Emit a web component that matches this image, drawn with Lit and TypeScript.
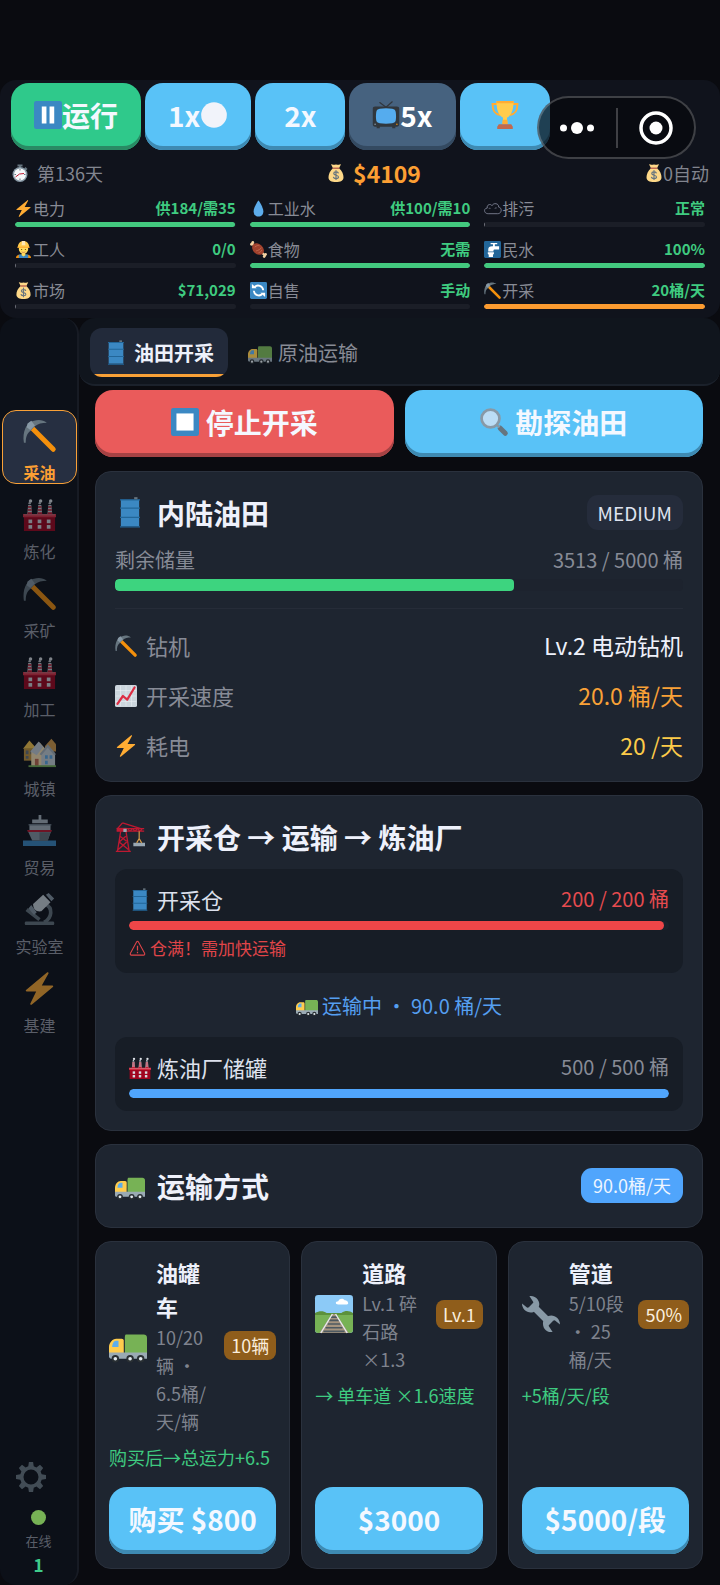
import { LitElement, html, css, svg, nothing } from "lit";
import { customElement, property, state } from "lit/decorators.js";

const chimney = (x: number) => svg`
  <path fill="#c8cdd4" d="M${x + 0.6} 7.5h3.4l.9 10.500h-5.200z"/>
  <path fill="#be1931" d="M${x + 0.4} 9h3.800v1.700h-3.900zM${x + 0.2} 12.300h4.300v1.700h-4.400zM${x} 15.600h4.800v2.400h-4.900z"/>
  <circle fill="#dfe3e8" cx="${x + 3.2}" cy="3.200" r="1.900"/>
  <circle fill="#c3c9d0" cx="${x + 2.2}" cy="5.600" r="1.300"/>`;

const windowCell = (x: number, y: number) =>
  svg`<rect fill="#d5dae0" x="${x}" y="${y}" width="4" height="4"/>`;

const art: Record<string, unknown> = {
  pause: svg`<rect fill="#3b88c3" width="36" height="36" rx="3"/><path fill="#fff" d="M10 7h6v22h-6zM20 7h6v22h-6z"/>`,
  stop: svg`<rect fill="#3b88c3" width="36" height="36" rx="3"/><path fill="#fff" d="M7 7h22v22H7z"/>`,
  circle: svg`<circle fill="#f1f3fa" cx="18" cy="18" r="16.500"/>`,
  tv: svg`<path stroke="#31373d" stroke-width="1.500" stroke-linecap="round" fill="none" d="M18 8L10 2M18 8l8-7"/>
    <path fill="#31373d" d="M4 7h28c2 0 3 1 3 3v20c0 2-1 3-3 3h-2v2h-4v-2H10v2H6v-2H4c-2 0-3-1-3-3V10c0-2 1-3 3-3z"/>
    <path fill="#55acee" d="M10 10c5-1 11-1 16 0 3 .5 4 2 4.500 4 .6 3.500.6 8 0 11-.5 2-1.500 3-4.500 3.500-5 .8-11 .8-16 0-3-.5-4-1.500-4.500-3.500-.6-3-.6-7.500 0-11 .5-2 1.500-3.500 4.500-4z"/>
    <circle fill="#f4900c" cx="32" cy="30" r="1"/><circle fill="#8899a6" cx="4" cy="30" r="1"/>`,
  trophy: svg`<path fill="none" stroke="#ffac33" stroke-width="2.600" d="M9 4H2c0 8 2 13 10 14M27 4h7c0 8-2 13-10 14"/>
    <path fill="#ffcc4d" d="M7 0h22c0 10-2 18-8.500 21.500L21 29h-6l.5-7.500C9 18 7 10 7 0z"/>
    <path fill="#ffac33" d="M7 0h22v3H7zM15 24h6l.6 6h-7.200z"/><path fill="#c1694f" d="M10 30h16l2 3v3H8v-3z"/>`,
  stopwatch: svg`<path fill="#66757f" d="M13 1h10v4h-3v4h-4V5h-3zM29 6l4 4-3 3-4-4z"/><circle fill="#8899a6" cx="18" cy="21" r="15"/>
    <circle fill="#f5f8fa" cx="18" cy="21" r="12"/><path fill="none" stroke="#be1931" stroke-width="2" d="M9 26l8-6 9-1"/><path stroke="#66757f" stroke-width="2" d="M18 10v3M18 29v3M7 21h3M26 21h3"/>`,
  money: svg`<path fill="#fdd888" d="M11 1c2 1.500 4 0 7 0s5 1.500 7 0l3-.5-4 8c6 5 9 12 9 18 0 7-6 9.500-15 9.500S3 33.500 3 26.500c0-6 3-13 9-18L8 .5z"/>
    <path fill="#bf6952" d="M12 7h12c1.200 0 1.200 3 0 3H12c-1.200 0-1.200-3 0-3z"/>
    <path fill="none" stroke="#67757f" stroke-width="2.400" stroke-linecap="round" d="M22.500 18c-1-3-9-3-9 1 0 4.500 9.500 2.500 9.500 7 0 4-9 4-10 .5M18 13v18"/>`,
  bolt: svg`<path fill="#ffac33" d="M32.900 15.200c-.1-.3-.4-.5-.8-.5H20.500L27.800 1.500c.4-.8-.5-1.700-1.300-1.100L3.300 19.600c-.6.5-.3 1.600.6 1.600h10.500L8 34.400c-.4.900.6 1.800 1.400 1.200l23.200-19.300c.3-.3.400-.7.300-1.100z"/>`,
  drop: svg`<path fill="#5dadec" d="M28.300 23.600C28.300 30.500 24.200 35 18 35S7.700 30.500 7.700 23.600 17 1 18 1s10.300 15.700 10.300 22.600z"/>`,
  cloud: svg`<path fill="none" stroke="#82869a" stroke-width="1.800" d="M9 29c-10 0-10-12-2-12-2-7 7-10 10-5 3-7 15-5 14 3 8 1 7 14-2 14z"/><path fill="none" stroke="#82869a" stroke-width="1.400" d="M10 19c1-2 3-2 4-1M27 17c-2-1-4 0-4 2"/>`,
  worker: svg`<path fill="#f4900c" d="M2 36c0-5 4-7 8-7h16c4 0 8 2 8 7z"/><path fill="#3b88c3" d="M8 36v-7l5-1 5 3 5-3 5 1v7z"/>
    <path fill="#ffdc5d" d="M14 24h8v6l-4 3-4-3z"/><circle fill="#ffdc5d" cx="18" cy="17" r="10"/>
    <path fill="#ffcc4d" d="M6 14C6 5 11 0 18 0s12 5 12 14z"/><path fill="#ffe8b6" d="M15 0h6l1 9h-8z"/><path fill="#ffac33" d="M5 12h26v2.500H5z"/>
    <circle fill="#664500" cx="14" cy="18" r="1.300"/><circle fill="#664500" cx="22" cy="18" r="1.300"/><path stroke="#c1694f" stroke-width="1.500" fill="none" d="M14 23c2 1.500 6 1.500 8 0"/>`,
  meat: svg`<path stroke="#f3d2a2" stroke-width="4.500" stroke-linecap="round" d="M4 5l28 26"/><circle fill="#f3d2a2" cx="6" cy="3" r="2.800"/><circle fill="#f3d2a2" cx="3" cy="7" r="2.800"/><circle fill="#f3d2a2" cx="33" cy="28" r="2.800"/><circle fill="#f3d2a2" cx="30" cy="33" r="2.800"/>
    <ellipse fill="#a0412d" cx="17" cy="17" rx="14" ry="10.500" transform="rotate(43 17 17)"/><path fill="none" stroke="#c1694f" stroke-width="2" d="M10 13c5-4 8-4 10-3M13 21c5-1 9-4 11-7M18 25c3-1 6-3 7-6"/>`,
  tap: svg`<rect fill="#226699" width="36" height="36" rx="3"/><path fill="#fff" d="M14 4h14v3h-5v4h9v7h-9c-2 0-3 1-3 3v1H9v-4c0-5 3-7 8-7h2V7h-5zM8 24h13v3l-2 2v5H10v-5l-2-2z"/>`,
  cycle: svg`<rect fill="#3b88c3" width="36" height="36" rx="3"/><path fill="none" stroke="#fff" stroke-width="4" d="M10 10.500c6-6 17-2.500 18 7M26 25.500c-6 6-17 2.500-18-7"/><path fill="#fff" d="M4 13V4l10 9zM32 23v9l-10-9z"/>`,
  pickaxe: svg`<path stroke="#f4900c" stroke-width="5.400" stroke-linecap="round" d="M9 9l24 24"/><path fill="#66757f" d="M1 26C-1 14 4 3 12 2c5-2 10-1 14 2-5 0-10 1-13 4l-5 5C4 16 3 20 3 26z"/><path fill="#8899a6" d="M5 5l4-3 4 5-5 5-4-3z"/>`,
  barrel: svg`<path fill="#3b88c3" d="M7 2h22v32H7z"/><path fill="#226699" d="M6 1.500h24V3H6zM6 11.500h24V13H6zM6 22.500h24V24H6zM6 34h24v1.500H6z"/><path fill="#67757f" d="M23-1h4v2.500h-4z"/>`,
  truck: svg`<g transform="translate(0 3)"><path fill="#77b255" d="M16 5h17c1.500 0 3 1 3 3v15H15V8c0-2 .5-3 1-3z"/><path fill="#ffcc4d" d="M7 9h5c1.500 0 2 1 2 2v12H0v-6c0-4 3-8 7-8z"/>
    <path fill="#5dadec" d="M6.500 11H9v6H3c0-3 1.500-6 3.500-6z"/><path fill="#9aaab4" d="M0 22h36v6H2c-1 0-2-1-2-2z"/>
    <g fill="#292f33"><circle cx="6" cy="28" r="3.500"/><circle cx="20" cy="28" r="3.500"/><circle cx="30" cy="28" r="3.500"/></g><g fill="#e1e8ed"><circle cx="6" cy="28" r="1.700"/><circle cx="20" cy="28" r="1.700"/><circle cx="30" cy="28" r="1.700"/></g></g>`,
  glass: svg`<path stroke="#66757f" stroke-width="6.500" stroke-linecap="round" d="M26 26l6.500 6.500"/><path stroke="#8899a6" stroke-width="3" d="M21 21l4 4"/><circle fill="#bbddf5" stroke="#8899a6" stroke-width="3.500" cx="13.500" cy="13.500" r="11.500"/>`,
  factory: svg`${chimney(5)}${chimney(16)}${chimney(27)}<path fill="#a0041e" d="M1 18h34v18H1z"/><path fill="#dd2e44" d="M0 17.500h36V21H0z"/><path fill="#c98a92" d="M1 18h34v.8H1z"/>
    ${[6, 16, 26].map((x) => [windowCell(x, 23.5), windowCell(x, 29.5)])}`,
  houses: svg`<path fill="#c6983c" d="M1 15h12v13H1z"/><path fill="#ffcc4d" d="M0 15L7 6l8 9z"/><path fill="#67757f" d="M3 17h3v4H3zM8 17h3v4H8zM3 23h3v3H3z"/><path fill="#d99e4a" d="M24 12l7-8 5 6v8H24z"/><path fill="#ffe8b6" d="M9 18l9-10 9 10v16H9z"/><path fill="#c8d4dd" d="M8 18L17 7l5 6-7 9z"/><path fill="#ccd6dd" d="M20 20l7-8 8 8v14H20z"/><path fill="#aab8c2" d="M18 21l9-11 9 11-2 1-7-8-7 8z"/><path fill="#c1694f" d="M13 26h4v8h-4z"/><path fill="#5dadec" d="M24 22h3v4h-3zM29 22h3v4h-3zM24 28h3v4h-3z"/><path fill="#77b255" d="M6 33h30v2H6z"/>`,
  ship: svg`<path fill="#3b88c3" d="M0 29h36v6H0z"/><path fill="#aab8c2" d="M17 1h3v6h-3zM10 6h17v4H10zM7 11h23v7H7z"/><path fill="#66757f" d="M6 11h25v1.500H6z"/><path fill="#8899a6" d="M5 18h26l-4 11H10z"/><path fill="#be1931" d="M4.500 17.500h27l-.7 2.200H5.300z"/><path fill="#66757f" d="M18 20h12l-3 9h-9z"/>`,
  microscope: svg`<path fill="#66757f" d="M3 31h30c1.500 0 1.500 4 0 4H3c-1.500 0-1.500-4 0-4z"/><path fill="none" stroke="#66757f" stroke-width="4" d="M24 12c9 4 8 15-1 20M4 18l14 11"/><path fill="#ccd6dd" d="M11 12L22 2l8 8-10 10c-6 1-9-3-9-8z"/><path fill="#8899a6" d="M25 2l3-2 6 6-3 3zM9 13l6 8-3 3-6-7z"/>`,
  gear: svg`<path fill="#66757f" fill-rule="evenodd" d="M15.500 0h5l.8 5.200 3.200 1.300 4.300-3.100 3.800 3.800-3.100 4.300 1.300 3.200 5.200.8v5l-5.200.8-1.300 3.200 3.100 4.300-3.800 3.800-4.300-3.100-3.200 1.300-.8 5.200h-5l-.8-5.200-3.200-1.300-4.300 3.100-3.800-3.800 3.100-4.300-1.300-3.200L0 20.500v-5l5.200-.8 1.300-3.200-3.100-4.300 3.800-3.800 4.300 3.100 3.200-1.300zM18 9a9 9 0 100 18 9 9 0 000-18z"/>`,
  chart: svg`<rect fill="#ccd6dd" width="36" height="36" rx="3"/><path stroke="#e8eef2" d="M1 9h34M1 18h34M1 27h34M9 1v34M18 1v34M27 1v34"/><path fill="none" stroke="#dd2e44" stroke-width="3.600" stroke-linecap="round" stroke-linejoin="round" d="M4 31l9-13 7 6L32 4"/>`,
  crane: svg`<path fill="none" stroke="#be1931" stroke-width="1.600" d="M3 35l4-25h6l4 25M1 35.200h18M6 17l8 6M13 17L5 24M5 24l11 9M14 24L4 33M9 1L3 8M9 1l22 7"/><path fill="none" stroke="#be1931" stroke-width="1.400" d="M2 8h33M2 11h33M15 8l3 3 3-3 3 3 3-3 3 3 3-3"/><path fill="#be1931" d="M2 7h12v4H2z"/><path fill="#99a8b3" d="M10 8h4v4h-4zM22 25h14v4H22z"/><path stroke="#d99e4a" stroke-width="1.400" fill="none" d="M29 11v9l-3 5M29 20l3 5"/>`,
  warning: svg`<path fill="none" stroke="#e04549" stroke-width="2.200" stroke-linejoin="round" d="M16 4c1-1.800 3-1.800 4 0l13 24c1 2 0 4-2 4H5c-2 0-3-2-2-4z"/><path stroke="#e04549" stroke-width="2.600" d="M18 12v10M18 25v3"/>`,
  railway: svg`<rect fill="#8ccaf7" width="36" height="36" rx="3"/><path fill="#5c913b" d="M0 17c4-2 8-2 11 0h14c4-3 8-2 11 0v6H0z"/><path fill="#77b255" d="M0 19h36v14c0 2-1 3-3 3H3c-2 0-3-1-3-3z"/><path fill="#a5947f" d="M16 18h4l12 18H4z"/><path stroke="#4d5961" stroke-width="1.600" d="M15 21h6M13.500 24h9M12 27.500h12M10 31h16M8 34.500h20"/><path stroke="#e6ebee" stroke-width="1.300" d="M16.500 18L5.500 36M19.500 18l11 18"/><path fill="#fff" d="M22 9c-3 0-3-3 0-3 1-3 5-3 6-1 3-.5 5 4 2 4z"/>`,
  wrench: svg`<path stroke="#8899a6" stroke-width="6.500" d="M9 9l18 18"/><path fill="#8899a6" d="M7 1c6-1 11 5 9 10l-5 5C6 18 0 14 0 8l5 4 4-1 2-4z"/><path fill="#8899a6" d="M29 35c-6 1-10-4-9-10l5-5c5-2 11 2 11 8l-5-4-4 1-2 4z"/>`,
};

const icon = (name: string, cls = "") =>
  html`<svg class="icon ${cls}" viewBox="0 0 36 36" aria-hidden="true">${art[name]}</svg>`;

const shared = css`
  :host, * { box-sizing: border-box; }
  .icon { width: 1em; height: 1em; flex: none; overflow: visible; display: block; }
  button { font: inherit; color: inherit; border: 0; background: none; padding: 0; margin: 0; cursor: pointer; }
  .game-btn {
    display: flex; align-items: center; justify-content: center;
    height: 67px; min-width: 90px; padding: 0 12px 4px; border-radius: 18px;
    background: #59c2f7; box-shadow: inset 0 -4px #3e8ab2;
    color: #f4f8ff; font-size: 28px; font-weight: 700; line-height: 40px; white-space: nowrap;
  }
`;

@customElement("progress-bar")
export class ProgressBar extends LitElement {
  @property({ type: Number }) value = 0;
  @property() tone = "green";
  @property() size = "thin";
  static styles = css`
    :host { display: block; }
    .track { height: 5px; border-radius: 3px; background: #1b1e27; overflow: hidden; }
    .track.mid { height: 9px; border-radius: 5px; background: #1b212b; }
    .track.thick { height: 12px; border-radius: 4px; background: #1d232e; }
    .fill { height: 100%; border-radius: inherit; background: #43c97f; }
    .thick .fill { background: #3dd47f; }
    .fill.orange { background: #fb9b30; }
    .fill.red { background: #ef4648; }
    .fill.blue { background: #50a5fc; }
    .fill.none { border-radius: 0; background: #6d6f78; }
  `;
  render() {
    return html`<div class="track ${this.size}" role="progressbar" aria-valuenow=${this.value}>
      <div class="fill ${this.tone}" style="width:${this.value}%"></div>
    </div>`;
  }
}

const stats = [
  ["bolt", "电力", "供184/需35", 99.5, "green"],
  ["drop", "工业水", "供100/需10", 100, "green"],
  ["cloud", "排污", "正常", 0.3, "none"],
  ["worker", "工人", "0/0", 0.3, "none"],
  ["meat", "食物", "无需", 100, "green"],
  ["tap", "民水", "100%", 100, "green"],
  ["money", "市场", "$71,029", 0.3, "none"],
  ["cycle", "自售", "手动", 0, "none"],
  ["pickaxe", "开采", "20桶/天", 100, "orange"],
] as const;

@customElement("top-bar")
export class TopBar extends LitElement {
  static styles = [shared, css`
    :host { display: block; position: relative; padding: 3px 11px 9px; background: #10131c; border-radius: 16px; }
    .speeds { display: flex; gap: 4px; }
    .speeds .game-btn { padding-left: 23px; padding-right: 23px; }
    .speeds .run { background: #2fc98b; box-shadow: inset 0 -4px #298a64; }
    .speeds .locked { background: #46627f; box-shadow: inset 0 -4px #344a61; color: #fff; }
    .status { display: flex; justify-content: space-between; align-items: center; margin-top: 6px; height: 34px; color: #82858f; font-size: 18px; }
    .status span { display: flex; align-items: center; }
    .status .day { gap: 8px; }
    .status .cash { gap: 8px; }
    .status .cash b { color: #fc9f33; font-size: 23px; }
    .grid { display: grid; grid-template-columns: repeat(3, 1fr); gap: 11px 14px; margin: 7px 4px 0; }
    .line { display: flex; justify-content: space-between; height: 22px; margin-bottom: 3px; align-items: center; font-size: 16px; line-height: 22px; color: #888b95; white-space: nowrap; }
    .name { display: flex; align-items: center; gap: 1px; }
    .name .icon { width: 17px; height: 17px; }
    .line b { color: #3fcb80; font-size: 15px; }
    .capsule { position: absolute; top: 16px; right: 24px; width: 159px; height: 63px; border-radius: 32px; border: 2px solid #ffffff38; background: #07080db3; display: flex; align-items: center; }
    .capsule button { flex: 1; display: flex; justify-content: center; align-items: center; height: 40px; }
    .capsule button + button { border-left: 2px solid #ffffff38; }
    .more { width: 34px; height: 12px; }
    .target { width: 34px; height: 34px; }
  `];
  render() {
    return html`
      <div class="speeds">
        <button class="game-btn run">${icon("pause")}运行</button>
        <button class="game-btn">1x${icon("circle")}</button>
        <button class="game-btn">2x</button>
        <button class="game-btn locked">${icon("tv")}5x</button>
        <button class="game-btn" aria-label="成就">${icon("trophy")}</button>
      </div>
      <div class="status">
        <span class="day">${icon("stopwatch")}第136天</span>
        <span class="cash">${icon("money")}<b>$4109</b></span>
        <span>${icon("money")}0自动</span>
      </div>
      <div class="grid">
        ${stats.map(([i, name, value, pct, tone]) => html`<div>
          <div class="line"><span class="name">${icon(i)}${name}</span><b>${value}</b></div>
          <progress-bar .value=${pct} tone=${tone}></progress-bar>
        </div>`)}
      </div>
      <div class="capsule">
        <button aria-label="更多"><svg class="more" viewBox="0 0 34 12" fill="#fff"><circle cx="3.500" cy="6" r="3.500"/><circle cx="17" cy="6" r="6"/><circle cx="30.500" cy="6" r="3.500"/></svg></button>
        <button aria-label="关闭"><svg class="target" viewBox="0 0 34 34"><circle cx="17" cy="17" r="15" fill="none" stroke="#fff" stroke-width="3.500"/><circle cx="17" cy="17" r="6.500" fill="#fff"/></svg></button>
      </div>`;
  }
}

@customElement("side-nav")
export class SideNav extends LitElement {
  @state() private active = 0;
  private items = [
    ["pickaxe", "采油"], ["factory", "炼化"], ["pickaxe", "采矿"], ["factory", "加工"],
    ["houses", "城镇"], ["ship", "贸易"], ["microscope", "实验室"], ["bolt", "基建"],
  ];
  static styles = [shared, css`
    :host { display: flex; flex-direction: column; width: 79px; flex: none; padding: 92px 0 6px; background: #0c1018; border-right: 2px solid #171b24; border-radius: 16px; }
    nav { display: flex; flex-direction: column; gap: 5px; padding: 0 0 0 2px; }
    .item { display: flex; flex-direction: column; align-items: center; justify-content: space-between; height: 74px; padding: 8px 0 0; border: 1px solid transparent; border-radius: 14px; color: #9a9eaa; font-size: 16px; line-height: 21px; opacity: 0.55; }
    .item .icon { width: 33px; height: 33px; }
    .item.on { opacity: 1; background: #262f41; border-color: #f9a137; color: #fc9f33; font-weight: 700; }
    .foot { margin-top: auto; display: flex; flex-direction: column; align-items: center; color: #5a5e68; font-size: 13px; line-height: 20px; }
    .gear { align-self: flex-start; margin-left: 16px; opacity: 0.6; }
    .gear .icon { width: 30px; height: 30px; }
    .dot { width: 15px; height: 15px; border-radius: 50%; background: #77b255; margin: 18px 0 6px; }
    .foot b { color: #3fcb8b; font-size: 17px; line-height: 28px; }
  `];
  render() {
    return html`
      <nav>${this.items.map(([i, label], n) => html`
        <button class="item ${n === this.active ? "on" : ""}" @click=${() => (this.active = n)}>${icon(i)}<span>${label}</span></button>`)}
      </nav>
      <div class="foot">
        <button class="gear" aria-label="设置">${icon("gear")}</button>
        <span class="dot"></span><span>在线</span><b>1</b>
      </div>`;
  }
}

@customElement("oil-field")
export class OilField extends LitElement {
  private rows = [
    ["pickaxe", "钻机", "Lv.2 电动钻机", ""],
    ["chart", "开采速度", "20.0 桶/天", "orange"],
    ["bolt", "耗电", "20 /天", "yellow"],
  ];
  private ways = [
    { i: "truck", name: "油罐车", info: "10/20辆 · 6.5桶/天/辆", tag: "10辆", note: "购买后→总运力+6.5", buy: "购买 $800" },
    { i: "railway", name: "道路", info: "Lv.1 碎石路 ×1.3", tag: "Lv.1", note: "→ 单车道 ×1.6速度", buy: "$3000" },
    { i: "wrench", name: "管道", info: "5/10段 · 25 桶/天", tag: "50%", note: "+5桶/天/段", buy: "$5000/段" },
  ];
  static styles = [shared, css`
    :host { display: block; flex: 1; min-width: 0; }
    .tabs { display: flex; gap: 6px; padding: 10px 11px 7px; background: #10151d; border-bottom: 2px solid #1b212b; border-radius: 16px; }
    .tab { display: flex; align-items: center; gap: 6px; height: 49px; padding: 0 14px; font-size: 20px; color: #888b95; border-radius: 12px; }
    .tab .icon { width: 24px; height: 24px; opacity: 0.65; }
    .tab.on { color: #eef1fb; font-weight: 700; background: linear-gradient(#f9a137, #f9a137) bottom / 100% 3px no-repeat #222a3a; }
    .tab.on .icon { opacity: 1; }
    .content { display: grid; gap: 13px; padding: 4px 17px 16px 16px; }
    .actions { display: grid; grid-template-columns: 1fr 1fr; gap: 11px; margin-bottom: 1px; }
    .actions .game-btn { gap: 7px; }
    .danger { background: #ea5b5b; box-shadow: inset 0 -4px #a64244; }
    .card { background: #1e2530; border: 1px solid #2a313d; border-radius: 16px; padding: 18px 19px 19px; }
    .head { display: flex; align-items: center; gap: 12px; height: 45px; }
    .head .icon { width: 30px; height: 30px; }
    h2 { margin: 0; flex: 1; font-size: 28px; line-height: 44px; font-weight: 700; color: #eef1fb; }
    .badge { border-radius: 11px; padding: 0 11px; font-size: 19px; line-height: 35px; background: #252c3b; color: #dfe3f0; }
    .badge.blue { padding: 0 12px; background: #50a5fc; color: #eef5ff; font-size: 18px; }
    .pair { display: flex; justify-content: space-between; align-items: center; font-size: 20px; line-height: 34px; color: #878b96; }
    .reserve { margin: 8px 0 2px; }
    .rows { display: grid; gap: 16px; margin-top: 17px; padding-top: 19px; border-top: 1px solid #262c38; }
    .label { display: flex; align-items: center; gap: 9px; font-size: 22px; }
    .label .icon { margin-top: 2px; }
    .rows .pair > :last-child { font-size: 23px; color: #eef1fb; }
    .rows .pair > .orange { color: #f9a137; }
    .rows .pair > .yellow { color: #fccb49; }
    .store { margin-top: 10px; padding: 14px 14px 13px; border-radius: 12px; background: #171d26; }
    .store .pair { line-height: 32px; margin-bottom: 6px; }
    .store .label { gap: 6px; color: #dde1ed; }
    .store .red { color: #e64b4f; }
    .alert { display: flex; align-items: center; gap: 4px; margin-top: 6px; font-size: 17px; line-height: 24px; color: #e04549; }
    .moving { display: flex; justify-content: center; align-items: center; gap: 4px; padding: 16px 0 4px; font-size: 20px; line-height: 34px; color: #559ff0; }
    .moving .icon { width: 22px; height: 22px; }
    .ways { display: grid; grid-template-columns: repeat(3, minmax(0, 1fr)); gap: 11px; }
    .way { display: flex; flex-direction: column; padding: 13px 13px 14px; }
    .top { display: flex; align-items: center; gap: 9px; }
    .top .icon { width: 38px; height: 38px; }
    .text { flex: 1; min-width: 0; }
    h3 { margin: 0; font-size: 22px; line-height: 34px; font-weight: 700; color: #eef1fb; }
    .text p { margin: 0; font-size: 18px; line-height: 28px; color: #7f838e; }
    .tag { border-radius: 8px; padding: 0 7px; background: #8f5d1b; color: #fbeedd; font-size: 18px; line-height: 29px; }
    .note { margin: 8px 0 16px; font-size: 18px; line-height: 28px; color: #3ecb80; white-space: nowrap; }
    .way .game-btn { margin-top: auto; }
  `];
  private store(i: string, name: string, amount: string, tone: string, pct: number, alert?: string) {
    return html`<div class="store">
      <div class="pair"><span class="label">${icon(i)}${name}</span><span class=${tone}>${amount}</span></div>
      <progress-bar size="mid" .value=${pct} tone=${tone}></progress-bar>
      ${alert ? html`<div class="alert">${icon("warning")}${alert}</div>` : nothing}
    </div>`;
  }
  render() {
    return html`
      <div class="tabs">
        <button class="tab on">${icon("barrel")}油田开采</button>
        <button class="tab">${icon("truck")}原油运输</button>
      </div>
      <div class="content">
        <div class="actions">
          <button class="game-btn danger">${icon("stop")}停止开采</button>
          <button class="game-btn">${icon("glass")}勘探油田</button>
        </div>
        <section class="card">
          <div class="head">${icon("barrel")}<h2>内陆油田</h2><span class="badge">MEDIUM</span></div>
          <div class="pair reserve"><span>剩余储量</span><span>3513 / 5000 桶</span></div>
          <progress-bar size="thick" .value=${70.26}></progress-bar>
          <div class="rows">${this.rows.map(([i, k, v, tone]) => html`
            <div class="pair"><span class="label">${icon(i)}${k}</span><span class=${tone}>${v}</span></div>`)}
          </div>
        </section>
        <section class="card">
          <div class="head">${icon("crane")}<h2>开采仓 → 运输 → 炼油厂</h2></div>
          ${this.store("barrel", "开采仓", "200 / 200 桶", "red", 99, "仓满！需加快运输")}
          <div class="moving">${icon("truck")}运输中 · 90.0 桶/天</div>
          ${this.store("factory", "炼油厂储罐", "500 / 500 桶", "blue", 100)}
        </section>
        <section class="card">
          <div class="head">${icon("truck")}<h2>运输方式</h2><span class="badge blue">90.0桶/天</span></div>
        </section>
        <div class="ways">${this.ways.map((w) => html`
          <section class="card way">
            <div class="top">${icon(w.i)}<div class="text"><h3>${w.name}</h3><p>${w.info}</p></div><span class="tag">${w.tag}</span></div>
            <p class="note">${w.note}</p>
            <button class="game-btn">${w.buy}</button>
          </section>`)}
        </div>
      </div>`;
  }
}

@customElement("app-root")
export class AppRoot extends LitElement {
  static styles = css`
    :host { display: flex; flex-direction: column; min-height: 100vh; box-sizing: border-box; padding-top: 80px; background: #0a0b10; font-family: "Noto Sans CJK SC", "Noto Sans", sans-serif; }
    .body { display: flex; flex: 1; }
  `;
  render() {
    return html`<top-bar></top-bar><div class="body"><side-nav></side-nav><oil-field></oil-field></div>`;
  }
}
